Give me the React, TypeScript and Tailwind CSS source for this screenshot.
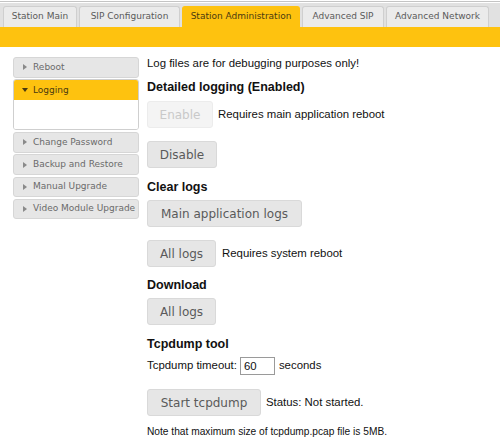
import React from 'react';

const tabs = [
  { label: 'Station Main', w: 'w-[74px]' },
  { label: 'SIP Configuration', w: 'w-[101px]' },
  { label: 'Station Administration', w: 'w-[118px]', active: true },
  { label: 'Advanced SIP', w: 'w-[82px]' },
  { label: 'Advanced Network', w: 'w-[103px]' },
];

const sideItems = ['Change Password', 'Backup and Restore', 'Manual Upgrade', 'Video Module Upgrade'];

const verdana = "font-['DejaVu_Sans',Verdana,sans-serif]";
const arial = "font-['Liberation_Sans',Arial,sans-serif]";

const Right = () => (
  <svg width="4" height="6" viewBox="0 0 4 6" className="shrink-0">
    <path d="M0 0 L4 3 L0 6 Z" fill="#8a8a8a" />
  </svg>
);

const Down = () => (
  <svg width="6" height="4" viewBox="0 0 6 4" className="shrink-0">
    <path d="M0 0 L6 0 L3 4 Z" fill="#4a3a10" />
  </svg>
);

const Btn: React.FC<{ w: string; disabled?: boolean; children: React.ReactNode }> = ({ w, disabled, children }) => (
  <button
    className={`${w} h-[27px] rounded-[3px] border text-[12px] ${verdana} flex items-center justify-center shrink-0 ${
      disabled ? 'bg-[#f4f4f4] border-[#ececec] text-[#c9c9c9]' : 'bg-[#e6e6e6] border-[#d9d9d9] text-[#5a5a5a]'
    }`}
  >
    {children}
  </button>
);

const SideItem: React.FC<{ label: string }> = ({ label }) => (
  <div className="h-[20.5px] rounded-[3px] border border-[#d6d6d6] bg-[#e6e6e6] flex items-center pl-[9px] gap-[6px]">
    <Right />
    <span className={`text-[9px] text-[#6a6a6a] ${verdana}`}>{label}</span>
  </div>
);

export default function App() {
  return (
    <div className="w-[500px] h-[445px] bg-white overflow-hidden pt-px">
      <div className="h-px bg-[#c4c4c4]" />
      <div className="mt-px bg-[#e1e1e1] pt-[3px] pl-[3px] flex gap-[2px]">
        {tabs.map((t) => (
          <div
            key={t.label}
            className={`${t.w} h-[21px] rounded-t-[3px] border border-b-0 flex items-center justify-center text-[9px] ${verdana} ${
              t.active ? 'bg-[#fec20f] border-[#fec20f] text-[#4a3a10]' : 'bg-[#ebebeb] border-[#cfcfcf] text-[#5a5a5a]'
            }`}
          >
            {t.label}
          </div>
        ))}
      </div>
      <div className="h-[20px] bg-[#fec20f]" />

      <div className="flex">
        <div className="ml-[13px] mt-[10px] w-[126px] flex flex-col gap-[1.8px]">
          <SideItem label="Reboot" />
          <div className="rounded-[3px] border border-[#cfcfcf] overflow-hidden">
            <div className="h-[20px] bg-[#fec20f] flex items-center pl-[8px] gap-[5px]">
              <Down />
              <span className={`text-[9px] text-[#4a3a10] ${verdana}`}>Logging</span>
            </div>
            <div className="h-[29px] bg-white" />
          </div>
          {sideItems.map((s) => (
            <SideItem key={s} label={s} />
          ))}
        </div>

        <div className={`ml-[8px] pt-[8px] flex flex-col items-start text-[#111] ${arial}`}>
          <p className="text-[11.4px] leading-[16px]">Log files are for debugging purposes only!</p>
          <h3 className="mt-[8px] text-[12.5px] leading-[16px] font-bold">Detailed logging (Enabled)</h3>
          <div className="mt-[6px] flex items-center">
            <Btn w="w-[66px]" disabled>Enable</Btn>
            <span className="ml-[5px] text-[11.4px]">Requires main application reboot</span>
          </div>
          <div className="mt-[13px]">
            <Btn w="w-[70px]">Disable</Btn>
          </div>

          <h3 className="mt-[11px] text-[12.5px] leading-[16px] font-bold">Clear logs</h3>
          <div className="mt-[5px]">
            <Btn w="w-[155px]">Main application logs</Btn>
          </div>
          <div className="mt-[13px] flex items-center">
            <Btn w="w-[69px]">All logs</Btn>
            <span className="ml-[6px] text-[11.4px]">Requires system reboot</span>
          </div>

          <h3 className="mt-[10px] text-[12.5px] leading-[16px] font-bold">Download</h3>
          <div className="mt-[5px]">
            <Btn w="w-[69px]">All logs</Btn>
          </div>

          <h3 className="mt-[11px] text-[12.5px] leading-[16px] font-bold">Tcpdump tool</h3>
          <div className="mt-[5px] flex items-center text-[11.4px]">
            <span>Tcpdump timeout:</span>
            <input
              defaultValue="60"
              className="ml-[3px] w-[35px] h-[18px] border border-[#9a9a9a] px-[3px] text-[11.4px] outline-none"
            />
            <span className="ml-[4px]">seconds</span>
          </div>
          <div className="mt-[14px] flex items-center">
            <Btn w="w-[114px]">Start tcpdump</Btn>
            <span className="ml-[5px] text-[11.4px]">Status: Not started.</span>
          </div>
          <p className="mt-[9px] text-[10.2px] leading-[14px]">
            Note that maximum size of tcpdump.pcap file is 5MB.
          </p>
        </div>
      </div>
    </div>
  );
}
